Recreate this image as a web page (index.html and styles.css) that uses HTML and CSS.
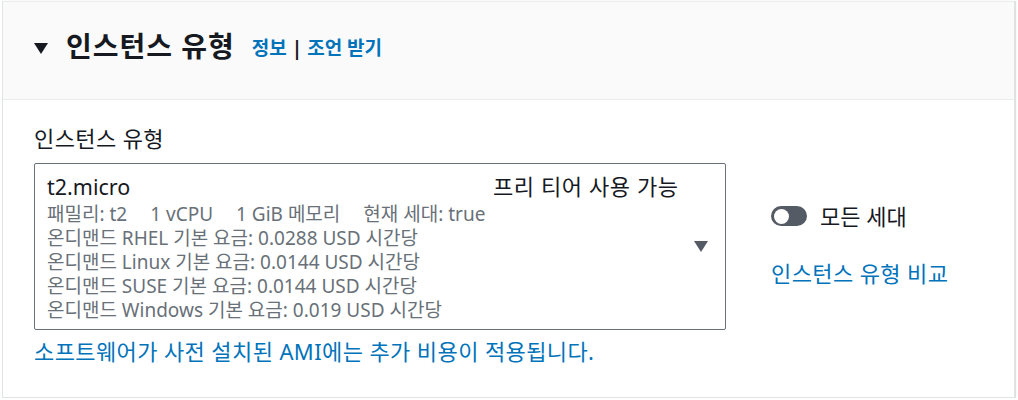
FILE: index.html
```html
<!DOCTYPE html>
<html lang="ko">
<head>
<meta charset="utf-8">
<link rel="stylesheet" href="styles.css">
</head>
<body>
<div class="card">
  <div class="card-header">
    <span class="caret-down"></span>
    <h2 class="title">인스턴스 유형</h2>
    <span class="info"><a class="link">정보</a> <span class="sep">|</span> <a class="link">조언 받기</a></span>
  </div>
  <div class="card-body">
    <div class="field">
      <div class="label">인스턴스 유형</div>
      <div class="row">
        <div class="select">
          <div class="select-main">
            <div class="select-top">
              <span class="name">t2.micro</span>
              <span class="tag">프리 티어 사용 가능</span>
            </div>
            <div class="desc">패밀리: t2<span class="gap"></span>1 vCPU<span class="gap"></span>1 GiB 메모리<span class="gap"></span>현재 세대: true</div>
            <div class="desc">온디맨드 RHEL 기본 요금: 0.0288 USD 시간당</div>
            <div class="desc">온디맨드 Linux 기본 요금: 0.0144 USD 시간당</div>
            <div class="desc">온디맨드 SUSE 기본 요금: 0.0144 USD 시간당</div>
            <div class="desc">온디맨드 Windows 기본 요금: 0.019 USD 시간당</div>
          </div>
          <span class="select-caret"></span>
        </div>
        <div class="side">
          <div class="toggle-row">
            <span class="toggle"><span class="knob"></span></span>
            <span class="toggle-label">모든 세대</span>
          </div>
          <a class="link side-link">인스턴스 유형 비교</a>
        </div>
      </div>
      <div class="note">소프트웨어가 사전 설치된 AMI에는 추가 비용이 적용됩니다.</div>
    </div>
  </div>
</div>
</body>
</html>
```
FILE: styles.css
```css
* { box-sizing: border-box; }
html, body { margin: 0; padding: 0; background: #fff; }
body {
  font-family: "Noto Sans", "Noto Sans CJK KR", sans-serif;
  color: #16191f;
  padding: 1px 3px 0 2px;
}
.card {
  border: 1px solid #e1e4e4;
  border-top-color: #eaeded;
  height: 397px;
  box-shadow: 1px 0 1px rgba(0,0,0,0.12);
}
.card-header {
  background: #fafafa;
  border-bottom: 1px solid #eaeded;
  height: 98px;
  display: flex;
  align-items: center;
  padding: 0 0 9px 31px;
}
.caret-down {
  width: 0; height: 0;
  border-left: 7px solid transparent;
  border-right: 7px solid transparent;
  border-top: 11px solid #16191f;
  margin-right: 18px;
  margin-top: 4px;
}
.title {
  margin: 0;
  font-size: 28px;
  font-weight: 700;
  line-height: 34px;
  letter-spacing: 1px;
}
.info {
  margin-left: 17px;
  font-size: 19px;
  font-weight: 700;
  margin-top: 2px;
}
.link { color: #0073bb; }
.sep { color: #16191f; font-weight: 700; }
.card-body { padding: 23px 31px 0 31px; }
.label {
  font-size: 22px;
  line-height: 30px;
  margin-bottom: 10px;
  letter-spacing: 0.4px;
}
.row { display: flex; align-items: flex-start; }
.select {
  width: 692px;
  height: 167px;
  border: 1px solid #687078;
  border-radius: 2px;
  display: flex;
  align-items: flex-start;
  padding: 7px 17px 0 12px;
}
.select-main { flex: 1; }
.select-top { display: flex; font-size: 21.5px; line-height: 31px; }
.name { width: 446px; }
.tag { color: #16191f; font-size: 22px; letter-spacing: 0.6px; }
.desc {
  font-size: 19px;
  line-height: 24px;
  color: #687078;
}
.gap { display: inline-block; width: 23px; }
.select-caret {
  align-self: center;
  width: 0; height: 0;
  border-left: 7px solid transparent;
  border-right: 7px solid transparent;
  border-top: 11px solid #545b64;
  margin-top: -8px;
}
.side { margin-left: 45px; padding-top: 40px; }
.toggle-row { display: flex; align-items: center; }
.toggle {
  width: 36px; height: 20px;
  background: #545b64;
  border-radius: 10px;
  padding: 2px 3px;
  display: flex;
  align-items: center;
}
.knob {
  width: 15px; height: 15px;
  border-radius: 50%;
  background: #fff;
}
.toggle-label { font-size: 22px; margin-left: 13px; line-height: 26px; }
.side-link { display: block; margin-top: 31px; font-size: 22px; line-height: 26px; letter-spacing: 0.4px; }
.note {
  color: #0073bb;
  font-size: 22px;
  line-height: 26px;
  margin-top: 8px;
  letter-spacing: 0.4px;
}
```
